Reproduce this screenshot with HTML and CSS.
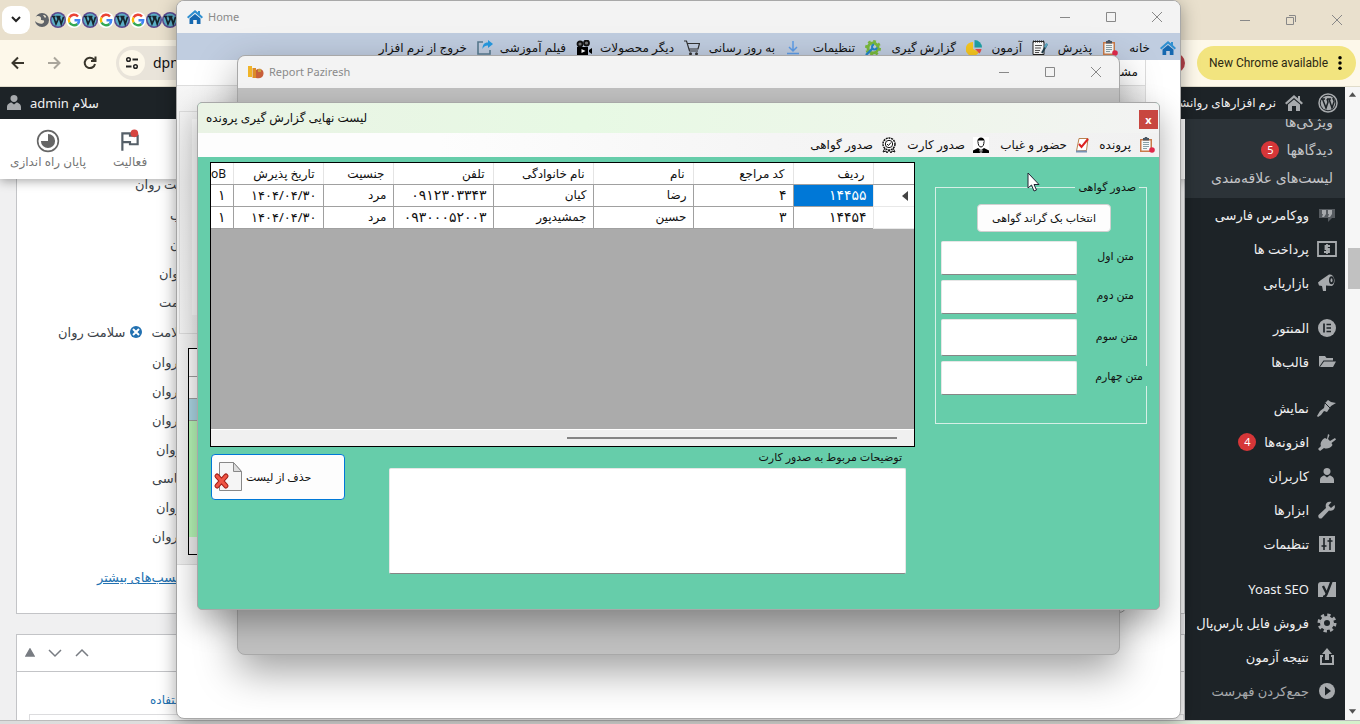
FILE: index.html
```html
<!DOCTYPE html>
<html lang="fa">
<head>
<meta charset="utf-8">
<title>Home</title>
<link rel="stylesheet" href="styles.css">
</head>
<body>
<svg class="defs" aria-hidden="true">
  <symbol id="house" viewBox="0 0 16 16"><path fill="#2f8fd0" d="M8 1 0 8l1.3 1.5L8 3.8l6.700 5.700L16 8l-3-2.700V2h-2v1.600z"/><path fill="#1568b0" d="M2.500 9.500 8 5l5.500 4.500V15H9.800v-4H6.200v4H2.500z"/></symbol>
  <symbol id="clip" viewBox="0 0 16 16"><path fill="#c97b4a" d="M1 2h12v13H1z"/><path fill="#f7fafa" d="M2.500 3.500h9v10h-9z"/><path fill="#4a5560" d="M4 1h1.500l.5-1h2l.5 1H10v2.500H4z"/><path stroke="#8aa0a6" d="M4 5.500h6M4 7.500h6M4 9.500h6M4 11.500h4"/><circle cx="13" cy="13" r="2.800" fill="#e0294a"/></symbol>
  <symbol id="note" viewBox="0 0 16 16"><path fill="#fff" stroke="#222" d="M1 1.500h11v13H1z"/><path stroke="#222" stroke-width="2" stroke-dasharray="1 1" d="M1 1.500h11"/><path stroke="#555" d="M3 5.500h7M3 8h6M3 10.500h5M3 12.500h4"/><path stroke="#223f4c" stroke-width="2" d="m15 4-5 9"/><path fill="#58a9c6" d="m14 3 2 1-2 4-2-1z"/></symbol>
  <symbol id="pie" viewBox="0 0 16 16"><path fill="#f8c820" d="M7 2a7 7 0 1 0 6 10L7 9z"/><path fill="#20a2a6" d="M8.500 0A7.500 7.500 0 0 1 16 7.500H8.500z"/><path fill="#e6504a" d="M9 9h6.500a7 7 0 0 1-2 4.500z"/></symbol>
  <symbol id="gearwrench" viewBox="0 0 16 16"><circle cx="8" cy="8" r="5" fill="none" stroke="#79ba3c" stroke-width="3"/><circle cx="8" cy="8" r="7" fill="none" stroke="#79ba3c" stroke-width="2" stroke-dasharray="2.800 2.700"/><path stroke="#2386c8" stroke-width="2.400" d="m1 15 7-7"/><path fill="none" stroke="#2386c8" stroke-width="2" d="M9 4.500a2.500 2.500 0 1 0 3 3"/></symbol>
  <symbol id="download" viewBox="0 0 16 16"><path fill="none" stroke="#5d9ce8" stroke-width="1.500" d="M8 1v10M4 7l4 4 4-4M2 13.500h12"/></symbol>
  <symbol id="cart" viewBox="0 0 16 16"><path fill="none" stroke="#333" stroke-width="1.200" d="M0 1h2.500l3 10H14M3.300 3.500H15.500L14 9H5"/><circle cx="6.500" cy="13.800" r="1.500" fill="#333"/><circle cx="12.500" cy="13.800" r="1.500" fill="#333"/></symbol>
  <symbol id="camera" viewBox="0 0 16 16"><path d="M1 7h11v8H1zm12 3 3-2v6l-3-2z"/><circle cx="4" cy="4" r="2.500" fill="#777" stroke="#111" stroke-width="1.800"/><circle cx="10.500" cy="3" r="2.500" fill="#777" stroke="#111" stroke-width="1.800"/><path fill="#fff" d="m5.500 9 4 2-4 2z"/></symbol>
  <symbol id="share" viewBox="0 0 16 16"><path fill="none" stroke="#587b90" stroke-width="1.600" d="M6 2H1v12h12v-4"/><path fill="#279ae0" d="M11 0l5 4-5 4V5.500C8 5.500 6.500 7 5.500 9 5.500 5 7 2.500 11 2.500z"/></symbol>
  <symbol id="check" viewBox="0 0 16 16"><path fill="#fff" stroke="#b9824f" d="M4 1.500h9l-1.500 12-10 .5z"/><path stroke="#7892b4" stroke-width="2" d="M1 14.500h11"/><path fill="none" stroke="#d22" stroke-width="2" d="m4 7 2.500 3L13 2"/></symbol>
  <symbol id="person" viewBox="0 0 16 16"><path fill="#fff" d="M0 0h16v16H0z"/><path d="M0 16v-2.500L5 11l3 2 3-2 5 2.500V16zM4.500 5c-1-6 8-6 7 0l-.8-1.500H5.500z"/><path fill="none" stroke="#111" d="M5 4.500c0 3 1 5.500 3 5.500s3-2.500 3-5.500"/><path fill="#fff" d="m6.500 12.500 1.500 1 1.500-1-.5 3.500H7z"/><path fill="#111" d="m7.300 13.500.2 2.500h1l.2-2.500z"/></symbol>
  <symbol id="badge" viewBox="0 0 16 16"><circle cx="8" cy="7" r="6" fill="#fff" stroke="#111" stroke-width="1.500" stroke-dasharray="2 .7"/><circle cx="8" cy="7" r="3.700" fill="none" stroke="#111"/><path fill="none" stroke="#111" d="m6 7 1.500 1.500L10 5.500M4 11l-2 4 3-1 1 2 2-3 2 3 1-2 3 1-2-4"/></symbol>
  <symbol id="user" viewBox="0 0 20 20"><path d="M10 9a3.500 3.500 0 0 1-3.500-4C6.500 1 13.500 1 13.500 5A3.500 3.500 0 0 1 10 9zM3 17v-3c0-3 3-4.500 4.500-4.500l2.500 2 2.500-2C14 9.500 17 11 17 14v3z"/></symbol>
  <symbol id="wp" viewBox="0 0 20 20"><circle cx="10" cy="10" r="9" fill="none" stroke="currentColor" stroke-width="1.500"/><circle cx="10" cy="10" r="7.300"/><path fill="none" stroke="#1d2327" stroke-width="1.500" d="M3 6h4M4.500 6 8 15l2-6-1-3M9 6h4M11 6l3 9 2-6c.5-2-1-2.500-1-4"/></symbol>
  <symbol id="fav-wp" viewBox="0 0 16 16"><circle cx="8" cy="8" r="8" fill="#5c4a90"/><circle cx="8" cy="8" r="6.500" fill="#5baec6"/><path fill="none" stroke="#17252e" stroke-width="1.700" d="M2 4.500h3.500M3.500 4.500 6 12l2.200-5-1-2.500H10.500M9 4.500l2.200 7.500 2.300-7"/></symbol>
  <symbol id="fav-g" viewBox="0 0 16 16"><circle cx="8" cy="8" r="8" fill="#fff"/><g fill="none" stroke-width="2.400"><path stroke="#ea4335" d="M12 4.500A5.200 5.200 0 0 0 3.500 5.500"/><path stroke="#fbbc05" d="M3.500 5.500a5.200 5.200 0 0 0 0 5"/><path stroke="#34a853" d="M3.500 10.500a5.200 5.200 0 0 0 8 1.500"/><path stroke="#4285f4" d="M11.500 12A5 5 0 0 0 13.200 8.200H8.500"/></g></symbol>
</svg>

<div class="browser">
  <header class="tabstrip">
    <button class="tab-search" aria-label="Search tabs"><svg viewBox="0 0 10 10" width="10" height="10"><path fill="none" stroke="#222" stroke-width="2" d="m1 3 4 4 4-4"/></svg></button>
    <div class="favs">
      <svg viewBox="0 0 16 16"><circle cx="8" cy="8" r="7" fill="#5f6368"/><path fill="#e8e0cd" d="M0 6c4-4 8-1 7 1s4 0 3 3-6 2-9-1zM9 3c3 0 4 2 2 3z"/></svg>
      <svg><use href="#fav-wp"/></svg><svg><use href="#fav-g"/></svg><svg><use href="#fav-wp"/></svg><svg><use href="#fav-g"/></svg><svg><use href="#fav-wp"/></svg><svg><use href="#fav-g"/></svg><svg><use href="#fav-wp"/></svg><svg><use href="#fav-wp"/></svg>
    </div>
    <div class="caption">
      <button aria-label="Minimize"><svg viewBox="0 0 12 12"><path d="M1 6.500h10"/></svg></button>
      <button aria-label="Restore"><svg viewBox="0 0 12 12"><path d="M1.500 3.500h7v7h-7zM4 1.500h6q.5 0 .5.500v6"/></svg></button>
      <button aria-label="Close"><svg viewBox="0 0 12 12"><path d="m1 1 10 10M11 1 1 11"/></svg></button>
    </div>
  </header>
  <div class="toolbar">
    <button aria-label="Back"><svg viewBox="0 0 16 16"><path d="M14 8H3M8 2.500 2.500 8 8 13.500"/></svg></button>
    <button aria-label="Forward" class="off"><svg viewBox="0 0 16 16"><path d="M2 8h11M8 2.500 13.500 8 8 13.500"/></svg></button>
    <button aria-label="Reload"><svg viewBox="0 0 16 16"><path d="M13 9a5.200 5.200 0 1 1-1.300-4.700L13.500 6M13.500 1.500V6H9"/></svg></button>
    <div class="omnibox"><span class="site"><svg viewBox="0 0 14 14" width="14" height="14"><path fill="none" stroke="#222" stroke-width="2" d="M7.500 3.500H13M1 10.500h5.500"/><circle cx="3.500" cy="3.500" r="1.800" fill="none" stroke="#222" stroke-width="1.500"/><circle cx="10.500" cy="10.500" r="1.800" fill="none" stroke="#222" stroke-width="1.500"/></svg></span><span>dpn</span></div>
    <span class="avatar"></span>
    <button class="update"><span>New Chrome available</span><svg viewBox="0 0 4 16"><circle cx="2" cy="2" r="2"/><circle cx="2" cy="8" r="2"/><circle cx="2" cy="14" r="2"/></svg></button>
  </div>

  <div class="viewport">
    <div class="site-area">
      <div class="adminbar">
        <a class="account" href="#"><svg><use href="#user"/></svg><span dir="rtl">سلام admin</span></a>
        <nav class="sitelinks" dir="rtl"><svg><use href="#wp"/></svg><svg viewBox="0 0 20 20"><path d="M10 2 1 10l1.500 1.500L10 5l7.500 6.500L19 10l-3-2.700V3h-2v2.500zM4 11.500 10 6.500l6 5V18h-4v-5H8v5H4z"/></svg><a href="#">نرم افزارهای روانشناسی</a></nav>
      </div>
      <div class="admin-row">
        <main class="page">
          <div class="wc-header">
            <button class="wc"><svg viewBox="0 0 22 22" width="24" height="24"><circle cx="11" cy="11" r="9.500" fill="none" stroke="#666" stroke-width="1.500"/><path fill="#666" d="M11 4.500a6.500 6.500 0 1 1-6.500 6.500H11z"/></svg><span>پایان راه اندازی</span></button>
            <button class="wc"><svg viewBox="0 0 22 22" width="24" height="24"><path fill="none" stroke="#555f68" stroke-width="2" d="M4 20V4h7v2h7v8h-7v-2H4"/><circle cx="15" cy="4" r="3.500" fill="#d64540"/></svg><span>فعالیت</span></button>
          </div>
          <section class="panel tags">
            <ul>
              <li class="in-a">سلامت روان</li><li class="in-e">طب</li><li class="in-e">درمان</li><li class="in-d">روان</li><li class="in-d">سلامت</li>
              <li class="pair"><span>سلامت روان</span><button aria-label="حذف"><svg viewBox="0 0 12 12" width="12" height="12"><circle cx="6" cy="6" r="6" fill="#2271b1"/><path stroke="#fff" stroke-width="2" d="m3 3 6 6M9 3 3 9"/></svg></button><span>سلامت</span></li>
              <li class="in-b">روان</li><li class="in-b">روان</li><li class="in-b">روان</li><li class="in-c">روان</li><li class="in-b">روانشناسی</li><li class="in-c">روان</li><li class="in-b">روان</li>
            </ul>
            <a class="more" href="#" dir="rtl">برچسب‌های بیشتر</a>
          </section>
          <section class="panel second">
            <div class="handles"><svg viewBox="0 0 10 10"><path fill="#787c82" d="m5 1 4 7H1z"/></svg><svg viewBox="0 0 14 10"><path d="m1 2 6 6 6-6"/></svg><svg viewBox="0 0 14 10"><path d="m1 8 6-6 6 6"/></svg></div>
            <a href="#" dir="rtl">استفاده</a>
            <div class="box"></div>
          </section>
        </main>
        <nav class="sidebar" dir="rtl">
          <div class="submenu"><a href="#">ویژگی‌ها</a><a href="#">دیدگاهها<b>5</b></a><a href="#">لیست‌های علاقه‌مندی</a></div>
          <a href="#"><svg viewBox="0 0 20 20"><path fill="#565b60" d="M2 4h16v9h-3l-4 4v-4H2z"/><path d="M5 5h4v4l-2 3H5l1-3H5zm6 0h4v4l-2 3h-2l1-3h-1z"/></svg>ووکامرس فارسی</a>
          <a href="#"><svg viewBox="0 0 20 20"><path fill="none" stroke="currentColor" stroke-width="1.800" d="M1 3h18v14H1z"/><path fill="none" stroke="currentColor" stroke-width="1.800" d="M13 7H8.500v3h3.500v3H7M10 5v10"/></svg>پرداخت ها</a>
          <a href="#"><svg viewBox="0 0 20 20"><path d="M1 9.500 4 7l8-5.500c5-1 8 8 3 11.500L9 12.500V18H6l-1-5-3-.5z"/><ellipse cx="14.500" cy="7.200" rx="2.500" ry="4" fill="#1d2327"/><ellipse cx="14.500" cy="7.200" rx="1" ry="2"/></svg>بازاریابی</a>
          <a href="#" class="gap"><svg viewBox="0 0 20 20"><circle cx="10" cy="10" r="9"/><path stroke="#1d2327" stroke-width="1.700" d="M7 5.500v9M9.500 6.500H14M9.500 10H14M9.500 13.500H14"/></svg>المنتور</a>
          <a href="#"><svg viewBox="0 0 20 20"><path d="M2 15V4h6l1.500 2H16v2.500H6.500zM7 9.500h12L16 15H3z"/></svg>قالب‌ها</a>
          <a href="#" class="gap wide"><svg viewBox="0 0 20 20"><path d="m8 5 3-3 3 2 5 1-5 3-4 6-3-1-3 4-3 2-1-1 3-5 4-3z"/><path stroke="#1d2327" d="m8 5 5 5"/></svg>نمایش</a>
          <a href="#"><svg viewBox="0 0 20 20"><path d="m11 2 1.500 1L11 7l2 2 5-3 1 1.500-4.500 3.500 1 2C13 17 9 17 7 16l-4 3-2-2 3-3c-1-2 0-6 4-8l2 1z"/></svg>افزونه‌ها<b>4</b></a>
          <a href="#"><svg><use href="#user"/></svg>کاربران</a>
          <a href="#"><svg viewBox="0 0 20 20"><path d="M17.500 5 14 8l-2.500-2.500L14.500 2C9 1 8 5 9 8l-7.500 7c-1 3 2 4.500 3.500 3l7-7.500c4 1 7-2 5.500-5.500z"/></svg>ابزارها</a>
          <a href="#"><svg viewBox="0 0 20 20"><path d="M2 2h16v16H2z"/><path fill="none" stroke="#1d2327" stroke-width="1.600" d="M7 4v12M4.500 12h5M13 4v12M10.500 7h5"/></svg>تنظیمات</a>
          <a href="#" class="gap"><svg viewBox="0 0 20 20"><path d="M4 3h15v15H1V6q0-3 3-3z"/><path fill="none" stroke="#1d2327" stroke-width="2.400" d="m6 7 3.500 7M15 1 10 14q-1 4-4 4"/></svg>Yoast SEO</a>
          <a href="#"><svg viewBox="0 0 20 20"><circle cx="10" cy="10" r="5" fill="none" stroke="currentColor" stroke-width="4"/><circle cx="10" cy="10" r="8" fill="none" stroke="currentColor" stroke-width="3" stroke-dasharray="3.300 2.980"/></svg>فروش فایل پارس‌پال</a>
          <a href="#"><svg viewBox="0 0 20 20"><path d="m10 1 5 6h-3v6H8V7H5z"/><path fill="none" stroke="currentColor" stroke-width="2" d="M6 9H4v8h12V9h-2"/></svg>نتیجه آزمون</a>
          <a href="#" class="dim"><svg viewBox="0 0 20 20"><circle cx="10" cy="10" r="8"/><path fill="#1d2327" d="m8 5.500 6 4.500-6 4.500z"/></svg>جمع‌کردن فهرست</a>
        </nav>
      </div>
    </div>
    <div class="scroll"><svg viewBox="0 0 10 6"><path d="m5 0 4 5H1z"/></svg><i></i><svg viewBox="0 0 10 6"><path d="m5 6 4-5H1z"/></svg></div>
  </div>
  <div class="taskbar"></div>
</div>

<div class="win home">
  <header class="title"><svg width="16" height="16"><use href="#house"/></svg><span>Home</span>
    <div class="caption"><button aria-label="Minimize"><svg viewBox="0 0 12 12"><path d="M1 6.500h10"/></svg></button><button aria-label="Maximize"><svg viewBox="0 0 12 12"><path d="M1.500 1.500h9v9h-9z"/></svg></button><button aria-label="Close"><svg viewBox="0 0 12 12"><path d="m1 1 10 10M11 1 1 11"/></svg></button></div>
  </header>
  <nav class="menu main-menu" dir="rtl">
    <button><svg><use href="#house"/></svg>خانه</button><button><svg><use href="#clip"/></svg>پذیرش</button><button><svg><use href="#note"/></svg>آزمون</button><button><svg><use href="#pie"/></svg>گزارش گیری</button><button><svg><use href="#gearwrench"/></svg>تنظیمات</button><button><svg><use href="#download"/></svg>به روز رسانی</button><button><svg><use href="#cart"/></svg>دیگر محصولات</button><button><svg><use href="#camera"/></svg>فیلم آموزشی</button><button><svg><use href="#share"/></svg>خروج از نرم افزار</button>
  </nav>
  <div class="tabpage">
    <div class="tab-head" dir="rtl">مشخصات</div>
    <div class="marble">
      <div class="frame"><div class="frame-in"></div></div>
      <div class="backgrid"><div></div><div></div><div></div><div></div><div></div></div>
    </div>
  </div>
</div>

<div class="win behind"></div>

<div class="win report">
  <header class="title"><svg width="16" height="16" viewBox="0 0 16 16"><path fill="#f0b428" d="M0 2h4v11H0z"/><path fill="#dc8c28" d="M4.500 4H8v10H4.500z"/><path fill="#c85f3a" d="M8 6c4-3 8 0 7.500 4s-4 5-7.500 4z"/><path fill="#c9a03a" d="M10 5h3v3h-3z"/></svg><span>Report Paziresh</span>
    <div class="caption"><button aria-label="Minimize"><svg viewBox="0 0 12 12"><path d="M1 6.500h10"/></svg></button><button aria-label="Maximize"><svg viewBox="0 0 12 12"><path d="M1.500 1.500h9v9h-9z"/></svg></button><button aria-label="Close"><svg viewBox="0 0 12 12"><path d="m1 1 10 10M11 1 1 11"/></svg></button></div>
  </header>
</div>

<div class="win dialog">
  <header class="dialog-title"><h1 dir="rtl">لیست نهایی گزارش گیری پرونده</h1><button aria-label="Close">x</button></header>
  <nav class="menu dialog-menu" dir="rtl">
    <button><svg><use href="#clip"/></svg>پرونده</button><button><svg><use href="#check"/></svg>حضور و غیاب</button><button><svg><use href="#person"/></svg>صدور کارت</button><button><svg><use href="#badge"/></svg>صدور گواهی</button>
  </nav>
  <div class="dialog-body">
    <div class="left">
      <div class="datagrid">
        <table dir="rtl">
          <colgroup><col class="c-head"><col class="c-row"><col class="c-std"><col class="c-std"><col class="c-std"><col class="c-std"><col class="c-sex"><col class="c-date"><col></colgroup>
          <thead><tr><th></th><th>ردیف</th><th>کد مراجع</th><th>نام</th><th>نام خانوادگی</th><th>تلفن</th><th>جنسیت</th><th>تاریخ پذیرش</th><th class="cut">oB</th></tr></thead>
          <tbody>
            <tr><td class="mark"><svg viewBox="0 0 6 10" width="6" height="10"><path d="M6 0v10L0 5z"/></svg></td><td class="num sel">۱۴۴۵۵</td><td class="num">۴</td><td>رضا</td><td>کیان</td><td class="num">۰۹۱۲۳۰۳۳۴۳</td><td>مرد</td><td class="date"><bdo dir="ltr">۱۴۰۴/۰۴/۳۰</bdo></td><td class="num">۱</td></tr>
            <tr><td class="mark"></td><td class="num">۱۴۴۵۴</td><td class="num">۳</td><td>حسین</td><td>جمشیدپور</td><td class="num">۰۹۳۰۰۰۵۲۰۰۳</td><td>مرد</td><td class="date"><bdo dir="ltr">۱۴۰۴/۰۴/۳۰</bdo></td><td class="num">۱</td></tr>
          </tbody>
        </table>
        <div class="hscroll"><i></i></div>
      </div>
      <div class="lower">
        <button class="remove"><svg viewBox="0 0 30 32" width="30" height="32"><path fill="#f5f5f5" stroke="#888" d="M6.500 1.500h14l8 9v19h-22z"/><path fill="#ddd" stroke="#888" d="M20.500 1.500v9h8z"/><path stroke="#a32018" stroke-width="5" stroke-linecap="round" d="m4 15 9 10M13 15 4 25"/><path stroke="#ef5545" stroke-width="3" stroke-linecap="round" d="m4 15 9 10M13 15 4 25"/></svg><span>حذف از لیست</span></button>
        <div class="notes"><label for="notes" dir="rtl">توضیحات مربوط به صدور کارت</label><textarea id="notes" dir="rtl"></textarea></div>
      </div>
    </div>
    <fieldset dir="rtl">
      <legend>صدور گواهی</legend>
      <button class="pick">انتخاب بک گراند گواهی</button>
      <div class="field"><label for="t1">متن اول</label><input id="t1"></div>
      <div class="field"><label for="t2">متن دوم</label><input id="t2"></div>
      <div class="field tall"><label for="t3">متن سوم</label><input id="t3"></div>
      <div class="field wide"><label for="t4">متن چهارم</label><input id="t4"></div>
    </fieldset>
  </div>
</div>
<svg class="cursor" viewBox="0 0 13 20" width="13" height="20"><path fill="#fff" stroke="#223" d="M1 1v15l3.500-3 2.500 6 2.500-1L7 12.500h5z"/></svg>
</body>
</html>
```
FILE: styles.css
```css
* { box-sizing: border-box; }
body { margin: 0; height: 100vh; overflow: hidden; position: relative; font: 12px/16px "Noto Sans", "DejaVu Sans", sans-serif; color: #111; }
button { font: inherit; color: inherit; border: 0; background: none; padding: 0; margin: 0; }
a { text-decoration: none; color: inherit; }
svg { flex: none; }
.defs { position: absolute; width: 0; height: 0; }

.browser { height: 100vh; display: flex; flex-direction: column; isolation: isolate; }
.tabstrip { height: 40px; flex: none; background: #e9e0cd; display: flex; align-items: center; padding-left: 2px; }
.tab-search { width: 28px; height: 28px; border-radius: 9px; background: #fff; }
.favs { display: flex; margin-left: 4px; }
.favs svg { width: 16px; height: 16px; }
.caption { margin-left: auto; display: flex; }
.caption button { width: 46px; height: 30px; display: grid; place-items: center; }
.caption svg { width: 12px; height: 12px; fill: none; stroke: #888; }
.toolbar { height: 47px; flex: none; background: #fdf8ea; border-bottom: 1px solid #e0dccb; display: flex; align-items: center; padding: 0 4px 0 0; }
.toolbar > button:not(.update) { width: 36px; height: 34px; }
.toolbar > button:not(.update) svg { width: 16px; height: 16px; fill: none; stroke: #39362c; stroke-width: 2; vertical-align: middle; }
.toolbar > button.off svg { stroke: #aaa69c; }
.omnibox { margin-left: 8px; flex: 1; height: 34px; border-radius: 17px; background: #e9e4da; display: flex; align-items: center; gap: 8px; padding-left: 3px; font-size: 14px; margin-right: 16px; }
.site { width: 26px; height: 26px; border-radius: 50%; background: #fdf8ea; display: grid; place-items: center; }
.avatar { width: 20px; height: 20px; border-radius: 50%; background: #b8434a; margin-right: 12px; }
.update { width: 159px; height: 34px; border-radius: 17px; background: #f2e47f; padding: 0 14px 0 12px; display: flex; align-items: center; justify-content: space-between; color: #2c2812; font-family: Roboto, sans-serif; }
.update svg { width: 4px; height: 14px; }

.viewport { flex: 1; min-height: 0; display: flex; overflow: hidden; }
.site-area { flex: 1; min-width: 0; display: flex; flex-direction: column; }
.adminbar { height: 32px; flex: none; background: #1d2327; color: #f0f0f1; display: flex; justify-content: space-between; align-items: center; padding: 0 7px 0 4px; font-size: 13px; }
.adminbar svg { width: 20px; height: 20px; fill: #a7aaad; color: #a7aaad; }
.account { display: flex; align-items: center; gap: 6px; }
.sitelinks { display: flex; align-items: center; gap: 14px; }
.sitelinks a { margin-right: -6px; font-size: 12px; }
.admin-row { flex: 1; min-height: 0; display: flex; }
.page { flex: 1; background: #f0f0f1; min-width: 0; overflow: hidden; display: flex; flex-direction: column; }
.wc-header { height: 60px; flex: none; background: #fff; box-shadow: 0 2px 10px rgba(0,0,0,.35); display: flex; z-index: 1; padding-top: 10px; }
.wc { display: flex; flex-direction: column; align-items: center; justify-content: flex-start; gap: 1px; width: 96px; color: #757575; }
.wc + .wc { width: 68px; }
.panel { background: #fff; border: 1px solid #c3c4c7; margin-left: 16px; color: #3c434a; flex: none; }
.tags { height: 435px; border-top: 0; font-size: 13px; }
.tags ul { list-style: none; margin: 0; padding: 0; display: flex; flex-direction: column; }
.tags li { height: 29px; line-height: 18px; display: flex; align-items: center; }
.tags li:first-child { height: 10px; margin-bottom: 11px; }
.in-a { padding-left: 118px; }
.in-b { padding-left: 135px; }
.in-c { padding-left: 139px; }
.in-d { padding-left: 142px; }
.in-e { padding-left: 153px; }
.tags .pair { padding-left: 41px; gap: 5px; height: 31px; }
.pair span:last-child { margin-left: 4px; }
.pair button { display: flex; }
.more { display: inline-block; margin: 19px 0 0 80px; color: #2271b1; text-decoration: underline; direction: rtl; font-size: 13px; }
.second { margin-top: 20px; height: 110px; }
.handles { height: 37px; border-bottom: 1px solid #c3c4c7; display: flex; align-items: center; gap: 13px; padding-left: 8px; }
.handles svg { width: 14px; height: 10px; fill: none; stroke: #787c82; stroke-width: 1.5; }
.handles svg:first-child { width: 10px; }
.second a { display: block; width: max-content; margin: 20px 0 0 133px; color: #2271b1; }
.box { margin: 6px 0 0 12px; border: 1px solid #dcdcde; height: 30px; }

.sidebar { width: 160px; flex: none; background: #1d2327; color: #f0f0f1; display: flex; flex-direction: column; overflow: hidden; font-size: 13px; }
.sidebar > a { height: 34px; flex: none; display: flex; align-items: center; gap: 8px; padding-right: 8px; white-space: nowrap; }
.sidebar > a > svg { width: 20px; height: 20px; fill: #a7aaad; color: #a7aaad; }
.sidebar > a.gap { margin-top: 11px; }
.sidebar > a.gap.wide { margin-top: 12px; }
.sidebar > a.dim { color: #a7aaad; }
.submenu { background: #2c3338; height: 79px; flex: none; color: #c3c4c7; padding-right: 12px; overflow: hidden; display: flex; flex-direction: column; justify-content: flex-end; padding-bottom: 6px; }
.submenu a { height: 28px; flex: none; display: flex; align-items: center; gap: 7px; font-size: 14px; }
.sidebar b { width: 18px; height: 18px; border-radius: 50%; background: #d63638; color: #fff; font-size: 11px; line-height: 18px; text-align: center; font-weight: 400; }
.scroll { width: 15px; flex: none; background: #f6f6f6; display: flex; flex-direction: column; align-items: center; padding: 5px 0 6px; }
.scroll svg { width: 9px; height: 6px; fill: #505050; }
.scroll i { width: 12px; height: 41px; background: #c1c1c1; margin: 150px 0 auto 2px; }
.taskbar { height: 4px; flex: none; background: linear-gradient(90deg, #dcdcdc, #e4e6e0 80%, #d4f2cb); border-top: 1px solid #bbb; }

.win { position: absolute; border: 1px solid #a8a8a8; border-radius: 8px; overflow: hidden; background: #fff; box-shadow: 0 12px 30px rgba(0,0,0,.32); display: flex; flex-direction: column; }
.home { left: 176px; right: 179px; top: 0; bottom: 5px; box-shadow: 0 4px 18px rgba(0,0,0,.35); }
.report { left: 237px; right: 240px; top: 55px; bottom: 69px; background: #c0c0c0; box-shadow: 0 16px 40px rgba(0,0,0,.38); }
.behind { right: 233px; width: 60px; top: 560px; bottom: 111px; box-shadow: none; }
.dialog { left: 197px; right: 200px; top: 102px; bottom: 114px; border-radius: 5px; background: #66cdaa; }
.title { height: 32px; flex: none; background: #f3f3f3; display: flex; align-items: center; gap: 5px; padding-left: 10px; color: #8a8a8a; font-size: 11px; }
.menu { display: grid; background: #c0cde0; font-size: 12px; line-height: 16px; }
.menu button { display: flex; align-items: center; gap: 10px; white-space: nowrap; }
.menu svg { width: 16px; height: 16px; }
.main-menu { height: 27px; flex: none; padding: 3px 4px 0 0; grid-template-columns: 58px 70px 66px 101px 80px 101px 108px 99px 1fr; }
.tabpage { height: 505px; margin-right: 34px; border: 1px solid #ddd; border-width: 0 1px 1px 0; display: flex; flex-direction: column; }
.tab-head { height: 26px; padding: 4px 7px; border-bottom: 1px solid #ddd; }
.marble { flex: 1; background: linear-gradient(160deg, #f6f6f6, #ececec 12%, #f4f4f4 30%, #eee 60%, #f5f5f5); display: flex; flex-direction: column; padding-top: 25px; }
.frame { height: 223px; flex: none; border: 1px solid #dcdcdc; margin-left: 2px; padding: 7px 0 18px 12px; }
.frame-in { height: 100%; background: #fcfcfc; }
.backgrid { margin: 14px 0 0 11px; height: 207px; border: 1px solid #000; background: #fff; display: flex; flex-direction: column; }
.backgrid div { height: 22px; border-bottom: 1px solid #a0a0a0; }
.backgrid div:first-child { height: 28px; }
.backgrid div:nth-child(3) { background: #add8e6; }
.backgrid div:nth-child(4) { flex: 1; background: #b9f9b9; border: 0; }
.backgrid div:nth-child(5) { height: 17px; background: #f0f0f0; border: 0; }

.dialog-title { height: 30px; flex: none; background: linear-gradient(90deg, #eaf3e5, #e7f9e4 40%, #eef6ea 75%, #f3f3f3); display: flex; justify-content: space-between; }
.dialog-title h1 { margin: 0; padding: 7px 8px; font-size: 12px; line-height: 16px; font-weight: 400; }
.dialog-title button { width: 19px; height: 19px; background: #c84640; color: #fff; font-weight: 700; font-size: 11px; line-height: 16px; margin: 7px 1px 0 0; }
.dialog-menu { height: 24px; flex: none; background: linear-gradient(270deg, #f1f1f1, #f5f5f5 40%, #fdfdfd 75%); padding-right: 4px; grid-template-columns: 64px 102px 92px 1fr; }
.dialog-menu button { gap: 8px; }
.dialog-body { flex: 1; display: flex; gap: 20px; padding: 5px 12px; align-items: flex-start; }
.left { flex: 1; min-width: 0; }
.datagrid { height: 285px; border: 1px solid #000; background: #ababab; display: flex; flex-direction: column; }
table { width: 100%; table-layout: fixed; border-collapse: collapse; font-size: 12px; line-height: 16px; }
.c-head { width: 41px; } .c-row { width: 80px; } .c-std { width: 100px; } .c-sex { width: 70px; } .c-date { width: 90px; }
th, td { height: 22px; padding: 0 8px 0 0; font-weight: 400; text-align: right; background: #fff; border: 1px solid #a0a0a0; border-width: 0 0 1px 1px; white-space: nowrap; overflow: hidden; }
th { height: 21px; padding-top: 2px; border-left-color: #e4e4e4; }
td { padding-right: 6px; }
td.num { font-size: 14px; }
td.date { font-size: 13px; }
td:last-child, th:last-child { border-left: 0; }
td:last-child { padding-right: 7px; }
th.cut { padding-left: 0; direction: ltr; text-align: left; }
td.mark { padding: 0 6px 0 0; border-color: #e8e8e8; }
td.mark svg { vertical-align: middle; fill: #444; }
td.sel { background: #0078d7; color: #fff; }
.hscroll { height: 17px; margin-top: auto; background: #f0f0f0; border-top: 1px solid #fff; display: flex; align-items: center; justify-content: flex-end; padding-right: 17px; }
.hscroll i { width: 330px; height: 2px; background: #858585; }
.lower { display: flex; padding: 3px 9px 0 1px; gap: 44px; align-items: flex-start; }
.remove { width: 134px; height: 46px; margin-top: 4px; border: 1px solid #0078d7; border-radius: 4px; background: #fdfdfd; display: flex; align-items: center; gap: 3px; padding-left: 1px; font-size: 11px; }
.notes { flex: 1; display: flex; flex-direction: column; }
.notes label { padding: 0 4px 4px 0; font-size: 11px; line-height: 14px; }
textarea, input { border: 1px solid #e6e6e6; border-bottom-color: #868686; border-radius: 2px; background: #fff; margin: 0; resize: none; }
textarea { height: 106px; }
fieldset { width: 212px; height: 245px; margin: 17px 0 0; padding: 9px 5px 0 0; border: 1px solid #d6efe6; font-size: 11px; display: flex; flex-direction: column; gap: 5px; min-width: 0; }
legend { font-size: 11px; line-height: 16px; padding: 0 3px; margin-right: 2px; }
.pick { width: 134px; height: 28px; flex: none; margin: 0 30px 4px 0; background: #fdfdfd; border: 1px solid #d0d0d0; border-radius: 4px; }
.field { display: flex; justify-content: space-between; align-items: center; height: 34px; padding: 0 7px 0 5px; }
.field label { line-height: 20px; background: #66cdaa; margin-bottom: 4px; }
.field input { width: 136px; height: 100%; }
.field.tall { height: 37px; padding-right: 3px; }
.field.wide { padding-right: 0; }
.field.wide label { margin-right: -6px; padding-right: 4px; }
.cursor { position: absolute; left: 1027px; top: 172px; }
```
